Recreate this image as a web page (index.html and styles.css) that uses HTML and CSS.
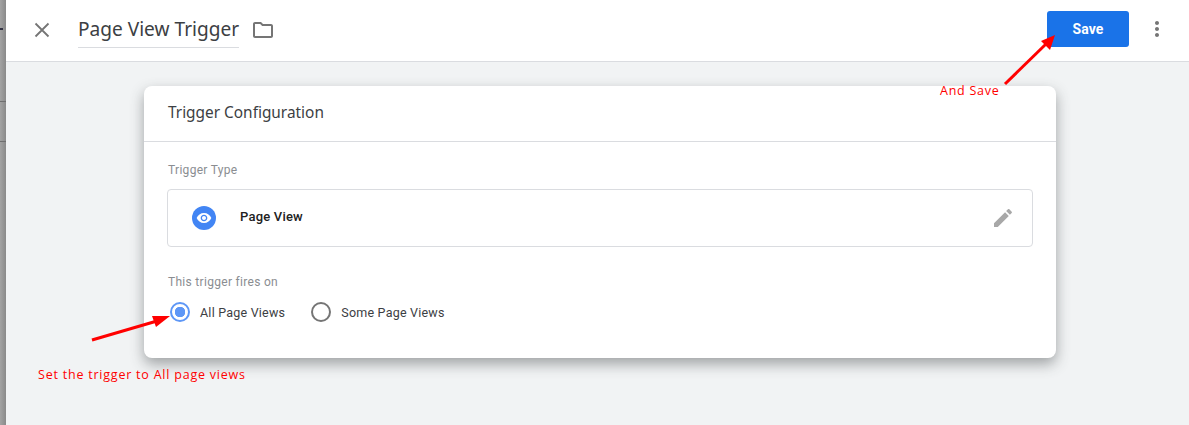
FILE: index.html
```html
<!DOCTYPE html>
<html lang="en">
<head>
<meta charset="utf-8">
<title>Page View Trigger</title>
<link rel="stylesheet" href="styles.css">
</head>
<body>
<div class="strip"><span class="tick"></span><span class="rule rule-a"></span><span class="rule rule-b"></span></div>
<div class="app">
  <header class="topbar">
    <button class="close" aria-label="Close">
      <svg width="16" height="16" viewBox="0 0 16 16"><path d="M1.5 1.5 14.5 14.5M14.5 1.5 1.5 14.5" stroke="#757575" stroke-width="1.8" fill="none"/></svg>
    </button>
    <div class="title">Page View Trigger</div>
    <svg class="folder" width="24" height="24" viewBox="0 0 24 24"><path fill="#757575" d="M20 6h-8l-2-2H4c-1.100 0-2 .9-2 2v12c0 1.100.9 2 2 2h16c1.100 0 2-.9 2-2V8c0-1.100-.9-2-2-2zm0 12H4V6h5.170l2 2H20v10z"/></svg>
    <button class="save">Save</button>
    <svg class="more" width="24" height="24" viewBox="0 0 24 24"><path fill="#757575" d="M12 8c1.100 0 2-.9 2-2s-.9-2-2-2-2 .9-2 2 .9 2 2 2zm0 2c-1.100 0-2 .9-2 2s.9 2 2 2 2-.9 2-2-.9-2-2-2zm0 6c-1.100 0-2 .9-2 2s.9 2 2 2 2-.9 2-2-.9-2-2-2z"/></svg>
  </header>
  <main class="content">
    <section class="card">
      <h2 class="card-title">Trigger Configuration</h2>
      <div class="card-body">
        <div class="label">Trigger Type</div>
        <div class="type-box">
          <span class="type-icon">
            <svg width="16" height="16" viewBox="0 0 24 24"><path fill="#fff" d="M12 4.500C7 4.500 2.730 7.610 1 12c1.730 4.390 6 7.500 11 7.500s9.270-3.110 11-7.500c-1.730-4.390-6-7.500-11-7.500zM12 17c-2.760 0-5-2.240-5-5s2.240-5 5-5 5 2.240 5 5-2.240 5-5 5zm0-8c-1.660 0-3 1.340-3 3s1.340 3 3 3 3-1.340 3-3-1.340-3-3-3z"/></svg>
          </span>
          <span class="type-name">Page View</span>
          <svg class="edit" width="24" height="24" viewBox="0 0 24 24"><path fill="#a8a8a8" d="M3 17.250V21h3.750L17.810 9.940l-3.750-3.750L3 17.250zM20.710 7.040c.39-.39.39-1.020 0-1.410l-2.340-2.340c-.39-.39-1.020-.39-1.410 0l-1.830 1.830 3.750 3.750 1.830-1.830z"/></svg>
        </div>
        <div class="label label-fires">This trigger fires on</div>
        <div class="radios">
          <label class="radio"><span class="dot dot-on"></span>All Page Views</label>
          <label class="radio"><span class="dot"></span>Some Page Views</label>
        </div>
      </div>
    </section>
  </main>
</div>
<svg class="arrows" width="1189" height="425" viewBox="0 0 1189 425">
  <path d="M1005 84 1046 44" stroke="#f00" stroke-width="3" fill="none"/>
  <path d="M1055 35 1050 50 1041 41z" fill="#f00"/>
  <path d="M92 340 157 321" stroke="#f00" stroke-width="3" fill="none"/>
  <path d="M170 316 156 327 152 316z" fill="#f00"/>
</svg>
<div class="note note-save">And Save</div>
<div class="note note-trigger">Set the trigger to All page views</div>
</body>
</html>
```
FILE: styles.css
```css
* { box-sizing: border-box; }
html, body { margin: 0; height: 425px; overflow: hidden; }
body { position: relative; display: flex; background: #f1f3f4; font-family: Roboto, "Liberation Sans", sans-serif; color: #212121; }
.strip { position: relative; flex: 0 0 6px; background: linear-gradient(90deg, #a3a3a3, #8a8a8a); }
.tick { position: absolute; left: 0; top: 28px; width: 3px; height: 2px; background: #334; }
.rule { position: absolute; left: 0; width: 6px; height: 1px; background: #6f6f6f; }
.rule-a { top: 101px; }
.rule-b { top: 141px; }
.app { flex: 1; display: flex; flex-direction: column; min-width: 0; }
.topbar { flex: 0 0 62px; display: flex; align-items: center; padding-bottom: 3px; background: #fff; border-bottom: 1px solid #dadce0; }
.close { margin-left: 28px; margin-top: 1px; width: 16px; height: 16px; padding: 0; border: 0; background: none; display: flex; }
.title { margin-left: 28px; margin-top: 1px; height: 37px; padding-top: 5px; border-bottom: 1px solid #dadce0; font-family: "Noto Sans", Roboto, sans-serif; font-size: 19.100px; line-height: 26px; color: #3c4043; white-space: nowrap; }
.folder { margin-left: 12px; margin-top: 1px; }
.save { margin-left: auto; width: 82px; height: 36px; border: 0; border-radius: 3px; background: #1a73e8; color: #fff; font: 700 14px Roboto, sans-serif; letter-spacing: .1px; }
.more { margin-left: 16px; margin-right: 20px; }
.content { flex: 1; padding: 24px 133px 0 138px; }
.card { height: 272px; background: #fff; border-radius: 8px; box-shadow: 0 6px 14px rgba(60,64,67,.45); }
.card-title { margin: 0; height: 56px; padding: 0 24px; border-bottom: 1px solid #dadce0; font: 400 15.400px/54px "Noto Sans", Roboto, sans-serif; color: #3c4043; }
.card-body { padding: 21px 23px 0; }
.label { margin-left: 1px; font-size: 12px; line-height: 14px; letter-spacing: .3px; color: #8a8d91; }
.type-box { display: flex; align-items: center; height: 58px; margin-top: 12px; padding: 0 17px 0 24px; border: 1px solid #dadce0; border-radius: 4px; }
.type-icon { flex: 0 0 24px; height: 24px; border-radius: 50%; background: #4285f4; display: flex; align-items: center; justify-content: center; }
.type-name { margin-left: 24px; margin-bottom: 4px; font-size: 13px; font-weight: 500; letter-spacing: .2px; color: #212121; }
.edit { margin-left: auto; }
.label-fires { margin-top: 28px; }
.radios { display: flex; gap: 23px; margin-top: 13px; }
.radio { display: flex; align-items: center; gap: 10px; height: 20px; font-size: 12.500px; letter-spacing: .22px; color: #3c4043; }
.dot { width: 20px; height: 20px; border: 2px solid #757575; border-radius: 50%; margin-left: 3px; }
.dot-on { border-color: #5e97f6; background: radial-gradient(circle, #5e97f6 0 5px, #fff 5.500px); }
.arrows { position: absolute; left: 0; top: 0; pointer-events: none; }
.note { position: absolute; font-family: "Open Sans", "DejaVu Sans", sans-serif; font-size: 12.500px; line-height: 16px; color: #f00; white-space: nowrap; letter-spacing: .78px; }
.note-save { left: 940px; top: 83px; letter-spacing: .75px; }
.note-trigger { left: 38px; top: 367px; }
```
